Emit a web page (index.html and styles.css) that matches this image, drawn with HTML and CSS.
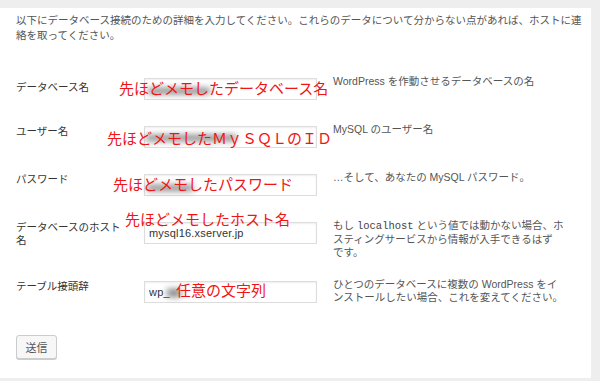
FILE: index.html
```html
<!DOCTYPE html>
<html lang="ja">
<head>
    <meta charset="UTF-8">
    <meta name="viewport" content="width=device-width, initial-scale=1.0">
    <title>データベース接続</title>
    <link rel="stylesheet" href="styles.css">
</head>

<body>
<div class="panel">
    <p class="intro">以下にデータベース接続のための詳細を入力してください。これらのデータについて分からない点があれば、ホストに連<br>絡を取ってください。</p>

    <form class="setup-form">
        <div class="form-row">
            <label class="field-label field-label-low" for="dbname">データベース名</label>
            <div class="field">
                <input class="text-input" type="text" id="dbname" name="dbname">
                <span class="smudge smudge-db"></span>
                <span class="note note-db">先ほどメモしたデータベース名</span>
            </div>
            <p class="field-desc">WordPress を作動させるデータベースの名</p>
        </div>

        <div class="form-row">
            <label class="field-label" for="uname">ユーザー名</label>
            <div class="field">
                <input class="text-input" type="text" id="uname" name="uname">
                <span class="smudge smudge-user"></span>
                <span class="note note-user">先ほどメモしたＭｙＳＱＬのＩＤ</span>
            </div>
            <p class="field-desc">MySQL のユーザー名</p>
        </div>

        <div class="form-row">
            <label class="field-label" for="pwd">パスワード</label>
            <div class="field">
                <input class="text-input" type="text" id="pwd" name="pwd">
                <span class="smudge smudge-pwd"></span>
                <span class="note note-pwd">先ほどメモしたパスワード</span>
            </div>
            <p class="field-desc">…そして、あなたの MySQL パスワード。</p>
        </div>

        <div class="form-row form-row-tall">
            <label class="field-label" for="dbhost">データベースのホスト名</label>
            <div class="field">
                <input class="text-input" type="text" id="dbhost" name="dbhost" value="mysql16.xserver.jp">
                <span class="note note-host">先ほどメモしたホスト名</span>
            </div>
            <p class="field-desc">もし <code>localhost</code> という値では動かない場合、ホ<br>スティングサービスから情報が入手できるはず<br>です。</p>
        </div>

        <div class="form-row">
            <label class="field-label" for="prefix">テーブル接頭辞</label>
            <div class="field">
                <input class="text-input" type="text" id="prefix" name="prefix" value="wp_">
                <span class="smudge smudge-prefix"></span>
                <span class="note note-prefix">任意の文字列</span>
            </div>
            <p class="field-desc">ひとつのデータベースに複数の WordPress をイ<br>ンストールしたい場合、これを変えてください。</p>
        </div>

        <button class="submit-btn" type="button">送信</button>
    </form>
</div>
</body>
</html>
```

FILE: styles.css
```css
body {
    margin: 0;
    background-color: #eeeeee;
    font-family: "Liberation Sans", "Noto Sans CJK JP", sans-serif;
}

.panel {
    width: 591px;
    height: 370px;
    margin-top: 8px;
    box-sizing: border-box;
    padding: 5px 0 0 16px;
    background-color: #ffffff;
}

.intro {
    margin: 0;
    font-size: 10.5px;
    line-height: 15px;
    color: #555555;
    white-space: nowrap;
}

.setup-form {
    margin-top: 32px;
}

.form-row {
    display: grid;
    grid-template-columns: 112px 173px 1fr;
    column-gap: 16px;
    align-items: start;
    height: 48px;
}

.form-row-tall {
    height: 59px;
}

.field-label {
    width: 110px;
    margin-top: 2px;
    font-size: 10.5px;
    line-height: 13px;
    color: #333333;
}

.field-label-low {
    margin-top: 6px;
}

.field {
    position: relative;
    margin-top: 3px;
}

.text-input {
    display: block;
    box-sizing: border-box;
    width: 173px;
    height: 22px;
    padding: 0 4px;
    border: 1px solid #dddddd;
    box-shadow: inset 0 1px 2px rgba(0, 0, 0, 0.07);
    font: 11px "Liberation Sans", sans-serif;
    letter-spacing: 0.2px;
    color: #333333;
    outline: none;
}

.field-desc {
    margin: 0;
    font-size: 10.5px;
    line-height: 13px;
    color: #555555;
    white-space: nowrap;
}

.field-desc code {
    font-family: "Liberation Mono", monospace;
    font-size: 10.5px;
    color: #444444;
}

/* blurred redactions over the inputs */
.smudge {
    position: absolute;
    background-color: #6f6f6f;
    filter: blur(3px);
    opacity: 0.85;
}
.smudge-db { left: 4px; top: 10px; width: 62px; height: 6px; }
.smudge-user { left: 2px; top: 9px; width: 90px; height: 6px; }
.smudge-pwd { left: 3px; top: 11px; width: 46px; height: 6px; }
.smudge-prefix { left: 23px; top: 8px; width: 14px; height: 8px; }

/* red hand-written notes */
.note {
    position: absolute;
    font-family: "Noto Sans CJK JP", sans-serif;
    font-size: 15px;
    line-height: 15px;
    color: #f01414;
    white-space: nowrap;
}
.note-db { left: -25px; top: 2px; }
.note-user { left: -37px; top: 4px; }
.note-pwd { left: -31px; top: 2px; }
.note-host { left: -19px; top: -11px; }
.note-prefix { left: 32px; top: 1px; }

.submit-btn {
    margin-top: 9px;
    width: 41px;
    height: 24px;
    padding: 0;
    background-color: #f7f7f7;
    border: 1px solid #cccccc;
    border-radius: 3px;
    box-shadow: 0 1px 0 #cccccc;
    font-family: "Noto Sans CJK JP", sans-serif;
    font-size: 11px;
    color: #555555;
}
```
